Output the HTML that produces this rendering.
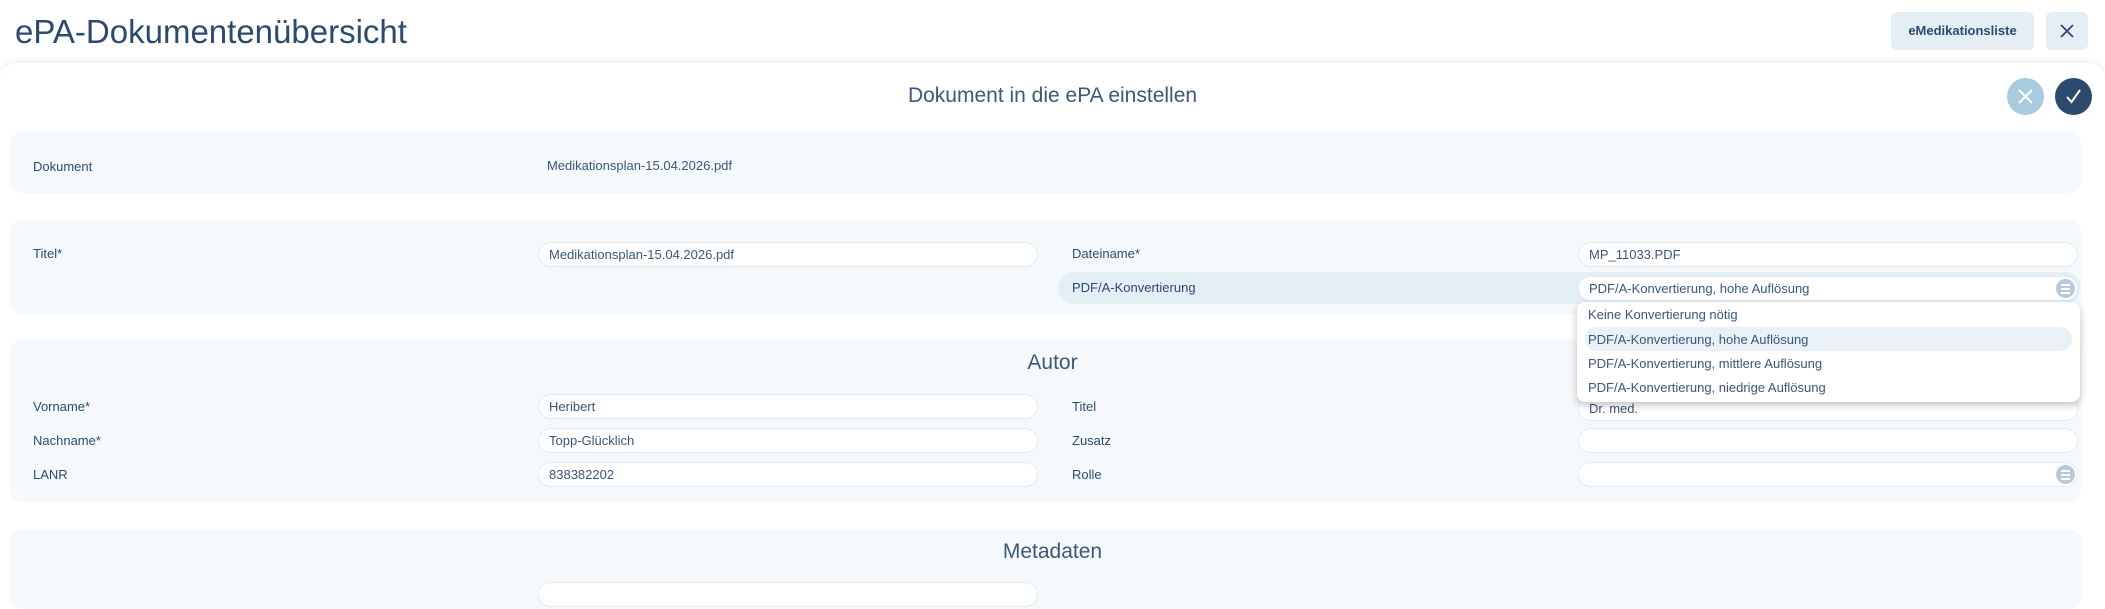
<!DOCTYPE html>
<html><head><meta charset="utf-8"><style>
*{margin:0;padding:0;box-sizing:border-box}
body{width:2105px;height:584px;overflow:hidden;background:#fff;font-family:"Liberation Sans",sans-serif;color:#2c4a6e;position:relative}
.a{position:absolute}
.t{font-size:13px;line-height:16px;white-space:nowrap}
.sec{position:absolute;background:#f5f9fc;border-radius:12px}
.in{position:absolute;background:#fff;border:1px solid #e3ebf2;border-radius:13px;height:25px;font-size:13px;line-height:23px;padding-left:10px;color:#3a5678;white-space:nowrap}
.h{position:absolute;font-size:21px;color:#3d5878;width:2105px;text-align:center;left:0}
.ic{position:absolute;width:19px;height:19px;border-radius:50%;background:#b8c9d9}
.ic:before{content:"";position:absolute;left:5px;top:5px;width:9px;height:1.5px;background:#fff;box-shadow:0 4px 0 #fff,0 8px 0 #fff}
</style></head><body>
<div class="a" style="left:15px;top:10px;font-size:33px;color:#2c4a6e;line-height:44px">ePA-Dokumentenübersicht</div>
<div class="a" style="left:1891px;top:12px;width:143px;height:38px;background:#e6eef5;border-radius:6px;font-size:13px;font-weight:bold;text-align:center;line-height:38px">eMedikationsliste</div>
<div class="a" style="left:2046px;top:12px;width:42px;height:38px;background:#e6eef5;border-radius:6px">
<svg width="42" height="38"><path d="M15 13L27 25M27 13L15 25" stroke="#2c4a6e" stroke-width="1.8"/></svg></div>
<div class="a" style="left:0;top:63px;width:2105px;height:540px;background:#fff;border-radius:16px 16px 0 0;box-shadow:0 -3px 6px rgba(0,0,0,0.06)"></div>
<div class="h" style="top:84px">Dokument in die ePA einstellen</div>
<div class="a" style="left:2007px;top:78px;width:37px;height:37px;border-radius:50%;background:#a9cbe0">
<svg width="37" height="37"><path d="M12 12L25 25M25 12L12 25" stroke="#fff" stroke-width="2"/></svg></div>
<div class="a" style="left:2055px;top:78px;width:37px;height:37px;border-radius:50%;background:#2c4a6e">
<svg width="37" height="37"><path d="M12 19L16.5 24L25 12" stroke="#fff" stroke-width="2" fill="none"/></svg></div>

<div class="sec" style="left:10px;top:132px;width:2071px;height:61px"></div>
<div class="a t" style="left:33px;top:159px">Dokument</div>
<div class="a t" style="left:547px;top:158px;color:#3a5678">Medikationsplan-15.04.2026.pdf</div>

<div class="sec" style="left:10px;top:220px;width:2071px;height:94px"></div>
<div class="a t" style="left:33px;top:246px">Titel*</div>
<div class="in" style="left:538px;top:242px;width:500px">Medikationsplan-15.04.2026.pdf</div>
<div class="a t" style="left:1072px;top:246px">Dateiname*</div>
<div class="in" style="left:1578px;top:242px;width:500px">MP_11033.PDF</div>
<div class="a" style="left:1058px;top:272px;width:1023px;height:32px;background:#e4eef5;border-radius:16px"></div>
<div class="a t" style="left:1072px;top:280px">PDF/A-Konvertierung</div>
<div class="in" style="left:1578px;top:276px;width:500px">PDF/A-Konvertierung, hohe Auflösung</div>
<div class="ic" style="left:2056px;top:279px"></div>

<div class="sec" style="left:10px;top:340px;width:2071px;height:162px"></div>
<div class="h" style="top:351px">Autor</div>
<div class="a t" style="left:33px;top:399px">Vorname*</div>
<div class="in" style="left:538px;top:394px;width:500px">Heribert</div>
<div class="a t" style="left:33px;top:433px">Nachname*</div>
<div class="in" style="left:538px;top:428px;width:500px">Topp-Glücklich</div>
<div class="a t" style="left:33px;top:467px">LANR</div>
<div class="in" style="left:538px;top:462px;width:500px">838382202</div>
<div class="a t" style="left:1072px;top:399px">Titel</div>
<div class="in" style="left:1578px;top:396px;width:500px">Dr. med.</div>
<div class="a t" style="left:1072px;top:433px">Zusatz</div>
<div class="in" style="left:1578px;top:428px;width:500px"></div>
<div class="a t" style="left:1072px;top:467px">Rolle</div>
<div class="in" style="left:1578px;top:462px;width:500px"></div>
<div class="ic" style="left:2056px;top:465px"></div>

<div class="sec" style="left:10px;top:529px;width:2071px;height:80px"></div>
<div class="h" style="top:540px">Metadaten</div>
<div class="in" style="left:538px;top:582px;width:500px"></div>

<div class="a" style="left:1577px;top:302px;width:503px;height:100px;background:#fff;border-radius:8px;box-shadow:0 3px 8px rgba(0,0,0,0.25)">
<div class="a" style="left:8px;top:25px;width:487px;height:24px;background:#e9f1f6;border-radius:12px"></div>
<div class="a t" style="left:11px;top:5px;color:#3a5678">Keine Konvertierung nötig</div>
<div class="a t" style="left:11px;top:30px;color:#3a5678">PDF/A-Konvertierung, hohe Auflösung</div>
<div class="a t" style="left:11px;top:54px;color:#3a5678">PDF/A-Konvertierung, mittlere Auflösung</div>
<div class="a t" style="left:11px;top:78px;color:#3a5678">PDF/A-Konvertierung, niedrige Auflösung</div>
</div>
</body></html>
